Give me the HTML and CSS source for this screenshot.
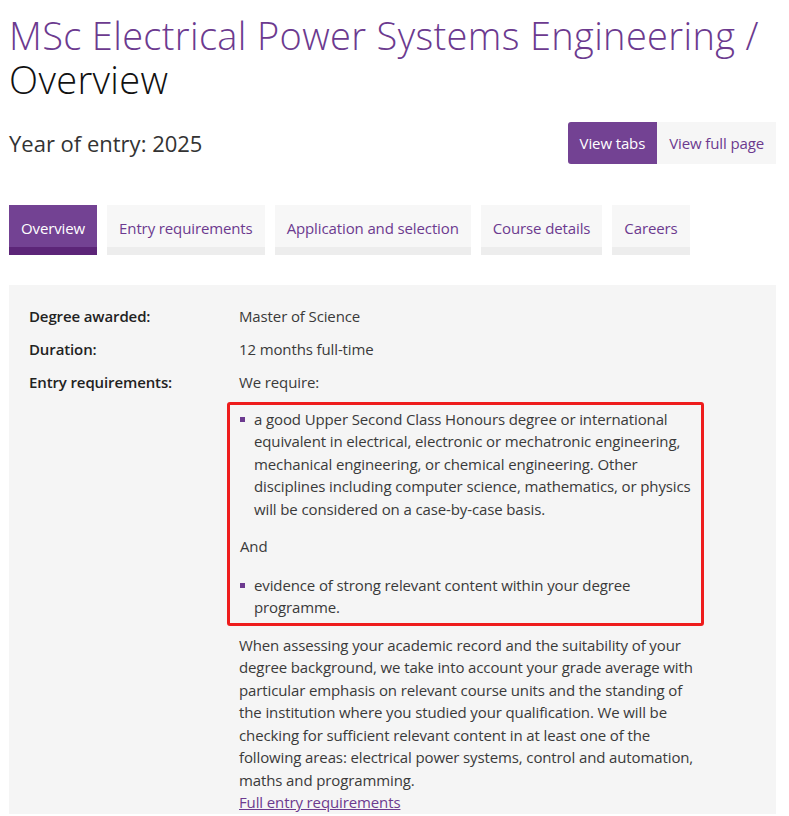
FILE: index.html
```html
<!DOCTYPE html>
<html lang="en">
  <head>
    <meta charset="UTF-8" />
    <meta name="viewport" content="width=device-width, initial-scale=1.0" />
    <title>MSc Electrical Power Systems Engineering / Overview</title>
    <link rel="stylesheet" href="styles.css">
  </head>
  <body>
    <div class="page">
      <!-- 标题 -->
      <h1 class="course-title">
        <span class="course-name">MSc Electrical Power Systems Engineering /</span>
        <span class="course-section">Overview</span>
      </h1>

      <div class="entry-bar">
        <p class="entry-year">Year of entry: 2025</p>
        <div class="view-switch">
          <a href="#" class="view-btn active">View tabs</a>
          <a href="#" class="view-btn">View full page</a>
        </div>
      </div>

      <!-- 标签页 -->
      <ul class="tabs">
        <li><a href="#" class="tab active">Overview</a></li>
        <li><a href="#" class="tab">Entry requirements</a></li>
        <li><a href="#" class="tab">Application and selection</a></li>
        <li><a href="#" class="tab">Course details</a></li>
        <li><a href="#" class="tab">Careers</a></li>
      </ul>

      <div class="panel">
        <dl class="facts">
          <dt>Degree awarded:</dt>
          <dd>Master of Science</dd>

          <dt>Duration:</dt>
          <dd>12 months full-time</dd>

          <dt>Entry requirements:</dt>
          <dd>
            <p>We require:</p>
            <div class="highlight">
              <ul class="req-list">
                <li>a good Upper Second Class Honours degree or international equivalent in electrical, electronic or mechatronic engineering, mechanical engineering, or chemical engineering. Other disciplines including computer science, mathematics, or physics will be considered on a case-by-case basis.</li>
              </ul>
              <p class="req-and">And</p>
              <ul class="req-list">
                <li>evidence of strong relevant content within your degree programme.</li>
              </ul>
            </div>
            <p class="req-note">When assessing your academic record and the suitability of your degree background, we take into account your grade average with particular emphasis on relevant course units and the standing of the institution where you studied your qualification. We will be checking for sufficient relevant content in at least one of the following areas: electrical power systems, control and automation, maths and programming.</p>
            <a href="#" class="more-link">Full entry requirements</a>
          </dd>
        </dl>
      </div>
    </div>
  </body>
</html>
```

FILE: styles.css
```css
/* 基础 */
body {
  margin: 0;
  font-family: "Open Sans", "Noto Sans", sans-serif;
  font-size: 15px;
  letter-spacing: -0.12px;
  color: #3a3a3a;
  background: #fff;
}

.page {
  padding: 0 13px 0 9px;
}

/* 标题 */
.course-title {
  margin: 13px 0 0;
  font-size: 38px;
  font-weight: 300;
  line-height: 44px;
  letter-spacing: 0.35px;
}

.course-name {
  display: block;
  color: #6c3a8f;
}

.course-section {
  display: block;
  color: #111;
}

.entry-bar {
  display: flex;
  justify-content: space-between;
  align-items: center;
  margin-top: 21px;
}

.entry-year {
  margin: 0;
  font-size: 22px;
  letter-spacing: 0;
  color: #333;
}

.view-switch {
  display: flex;
}

.view-btn {
  display: flex;
  align-items: center;
  height: 42px;
  padding: 0 12px;
  background: #f6f6f6;
  color: #6c3a8f;
  text-decoration: none;
}

.view-btn.active {
  background: #734293;
  color: #fff;
  border-radius: 3px 0 0 3px;
}

/* 标签页 */
.tabs {
  display: flex;
  gap: 10px;
  list-style: none;
  margin: 41px 0 0;
  padding: 0;
}

.tab {
  display: flex;
  align-items: center;
  box-sizing: border-box;
  height: 50px;
  padding: 4px 12px 0;
  background: #f7f7f7;
  border-bottom: 8px solid #ededed;
  color: #6c3a8f;
  text-decoration: none;
}

.tab.active {
  background: #734293;
  border-bottom-color: #5c2578;
  color: #fff;
}

/* 内容面板 */
.panel {
  margin-top: 30px;
  padding: 20px 20px 0;
  background: #f5f5f5;
}

.facts {
  display: grid;
  grid-template-columns: 210px 464px;
  row-gap: 10.5px;
  margin: 0;
  line-height: 22.5px;
}

.facts dt {
  font-weight: 600;
  color: #222;
}

.facts dd {
  margin: 0;
}

.facts p {
  margin: 0;
}

/* 红框 */
.highlight {
  margin: 8px -1px 0 -12px;
  padding: 3px 0 4px 10px;
  border: 3px solid #ee1c1c;
  border-radius: 3px;
}

.req-list {
  list-style: none;
  margin: 0;
  padding: 0 0 0 14px;
}

.req-list li {
  position: relative;
}

.req-list li::before {
  content: "";
  position: absolute;
  left: -14px;
  top: 9px;
  width: 5px;
  height: 5px;
  background: #6c3a8f;
}

.facts .req-and {
  margin: 15px 0 16px;
}

.facts .req-note {
  margin-top: 8px;
}

.more-link {
  color: #6c3a8f;
}
```
